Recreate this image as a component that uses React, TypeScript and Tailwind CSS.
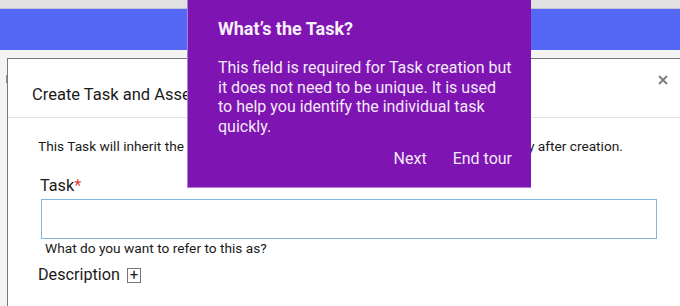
import React from 'react';

const font = { fontFamily: 'Roboto, "Liberation Sans", sans-serif' };

function Tour() {
  return (
    <div className="absolute left-[187px] top-0 w-[344px] h-[188px] bg-[#7e14b2] border-l border-b border-[#b27fd6] text-white pl-[30px] pr-[17px] pt-[18px]">
      <h3 className="text-[18px] font-bold leading-[22px] text-[#f7f0fb]">What’s the Task?</h3>
      <p className="mt-[18px] text-[16px] leading-[19.5px] text-[#f3eaf8]">
        This field is required for Task creation but it does not need to be unique. It is used to help you identify the individual task quickly.
      </p>
      <div className="mt-[13px] flex justify-end gap-[26px] text-[16px] leading-[20px] text-[#f3eaf8] pr-[2px]">
        <button>Next</button>
        <button>End tour</button>
      </div>
    </div>
  );
}

export default function App() {
  return (
    <div className="relative w-[680px] h-[306px] overflow-hidden bg-[#f4f4f4]" style={font}>
      <div className="h-[9px] bg-[#e1e1e1] border-b border-[#c4c4d4]" />
      <div className="h-[41px] bg-[#5467f5]" />
      <div className="relative pt-[8px] pl-[7px]">
        <div className="absolute left-[6px] top-[25px] w-[1px] h-[8px] bg-[#8a8a8a]" />
        <div className="h-[260px] bg-white border-l border-t border-[#7a7a7a]">
          <div className="flex items-center justify-between h-[59px] border-b border-[#e2e2e2] pl-[24px] pr-[12px]">
            <h2 className="text-[16.5px] text-[#1a1a1a] pt-[15px]">Create Task and Asset</h2>
            <svg width="10" height="10" viewBox="0 0 10 10" className="-mt-[16px]">
              <path d="M1 1 L9 9 M9 1 L1 9" stroke="#7a7a7a" strokeWidth="1.8" />
            </svg>
          </div>
          <div className="pl-[30px] pr-[23px]">
            <p className="mt-[19px] text-[13.7px] leading-[18px] text-[#1a1a1a] whitespace-nowrap">
              This Task will inherit the permissions of its Asset. You can adjust these separately after creation.
            </p>
            <label className="block mt-[20px] pl-[2px] text-[16.2px] leading-[22px] text-[#1a1a1a]">
              Task<span className="text-[#e53935]">*</span>
            </label>
            <div className="ml-[3px] mt-[2px] h-[40px] border border-[#80b6dd]" />
            <p className="ml-[7px] mt-0 text-[13.7px] leading-[18px] text-[#1a1a1a]">What do you want to refer to this as?</p>
            <div className="mt-[7px] flex items-center gap-[7px] text-[16.2px] leading-[22px] text-[#1a1a1a]">
              <span>Description</span>
              <span className="w-[14px] h-[15px] border border-[#777] flex items-center justify-center text-[15px] leading-none">+</span>
            </div>
          </div>
        </div>
      </div>
      <Tour />
    </div>
  );
}
